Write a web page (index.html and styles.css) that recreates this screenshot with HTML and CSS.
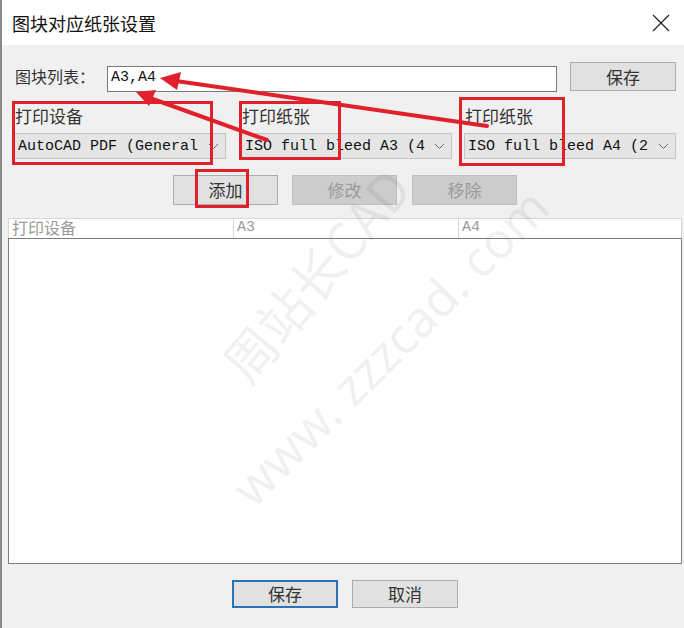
FILE: index.html
```html
<!DOCTYPE html>
<html lang="zh-CN">
<head>
    <meta charset="UTF-8">
    <title>图块对应纸张设置</title>
    <link rel="stylesheet" href="styles.css">
</head>
<body>
    <div class="dialog">
        <!-- Заголовок окна -->
        <div class="titlebar">
            <span class="title">图块对应纸张设置</span>
            <svg class="close" width="18" height="18" viewBox="0 0 18 18">
                <path d="M1 1 L17 17 M17 1 L1 17" stroke="#222" stroke-width="1.2" fill="none"/>
            </svg>
        </div>

        <div class="content">
            <!-- Список блоков -->
            <div class="list-row">
                <span class="list-label">图块列表：</span>
                <div class="textbox">A3,A4</div>
                <button class="btn save-top">保存</button>
            </div>

            <!-- Устройство и бумага -->
            <div class="fields">
                <div class="field field-device">
                    <div class="field-label">打印设备</div>
                    <div class="combo"><span>AutoCAD PDF (General</span><svg class="chev" width="11" height="7" viewBox="0 0 11 7"><path d="M1 1 L5.5 5.5 L10 1" stroke="#666" fill="none"/></svg></div>
                </div>
                <div class="field field-a3">
                    <div class="field-label">打印纸张</div>
                    <div class="combo"><span>ISO full bleed A3 (4</span><svg class="chev" width="11" height="7" viewBox="0 0 11 7"><path d="M1 1 L5.5 5.5 L10 1" stroke="#666" fill="none"/></svg></div>
                </div>
                <div class="field field-a4">
                    <div class="field-label">打印纸张</div>
                    <div class="combo"><span>ISO full bleed A4 (2</span><svg class="chev" width="11" height="7" viewBox="0 0 11 7"><path d="M1 1 L5.5 5.5 L10 1" stroke="#666" fill="none"/></svg></div>
                </div>
            </div>

            <!-- Кнопки действий -->
            <div class="actions">
                <button class="btn">添加</button>
                <button class="btn disabled">修改</button>
                <button class="btn disabled">移除</button>
            </div>

            <!-- Таблица -->
            <div class="grid">
                <div class="grid-head">
                    <div class="col col-device">打印设备</div>
                    <div class="col col-a3">A3</div>
                    <div class="col col-a4">A4</div>
                </div>
                <div class="grid-body"></div>
            </div>

            <!-- Нижние кнопки -->
            <div class="footer">
                <button class="btn default">保存</button>
                <button class="btn">取消</button>
            </div>
        </div>

        <!-- Водяной знак -->
        <div class="watermark wm-name">周站长CAD</div>
        <div class="watermark wm-url">www. zzzcad. com</div>

        <!-- Пометки поверх скриншота -->
        <svg class="marks" width="684" height="628" viewBox="0 0 684 628">
            <g fill="none" stroke="#e0212b" stroke-width="3">
                <rect x="13.5" y="102.5" width="198" height="61"/>
                <rect x="240.5" y="102.5" width="99" height="56"/>
                <rect x="460.5" y="98.5" width="103" height="66"/>
                <rect x="196.5" y="170.5" width="51" height="36"/>
            </g>
            <g stroke="#e0212b" stroke-width="4" stroke-linecap="round">
                <line x1="487" y1="126" x2="176" y2="81"/>
                <line x1="267" y1="140" x2="150" y2="98"/>
            </g>
            <g fill="#e0212b">
                <polygon points="160,78 181,72 177,90"/>
                <polygon points="136,92 156,90 149,106"/>
            </g>
        </svg>
    </div>
</body>
</html>
```

FILE: styles.css
```css
/* Общие стили */
body {
    margin: 0;
    background: #f0f0f0;
    font-family: "Noto Sans CJK SC", "Noto Sans", sans-serif;
}

.dialog {
    position: relative;
    width: 684px;
    height: 628px;
    overflow: hidden;
    background: #f0f0f0;
    border-left: 2px solid #8a8a8a;
    box-sizing: border-box;
}

.titlebar {
    height: 45px;
    background: #ffffff;
    display: flex;
    align-items: center;
    justify-content: space-between;
    padding: 0 14px 0 10px;
}

.title {
    font-size: 18px;
    color: #111;
}

.close {
    display: block;
}

.content {
    display: flex;
    flex-direction: column;
}

/* Кнопки */
.btn {
    font-family: "Noto Sans CJK SC", sans-serif;
    font-size: 17px;
    color: #333;
    background: #e1e1e1;
    border: 1px solid #adadad;
    box-sizing: border-box;
    padding: 0;
    width: 106px;
    height: 30px;
    line-height: 26px;
}

.btn.disabled {
    background: #cccccc;
    border-color: #bfbfbf;
    color: #9a9a9a;
}

.btn.default {
    border: 2px solid #2a73b8;
    height: 29px;
}

/* Строка списка */
.list-row {
    display: flex;
    align-items: flex-start;
    padding: 17px 0 0 13px;
}

.list-label {
    width: 92px;
    margin-top: 3px;
    font-size: 16px;
    line-height: 22px;
    color: #333;
}

.textbox {
    width: 450px;
    height: 26px;
    margin-top: 4px;
    box-sizing: border-box;
    background: #fff;
    border: 1px solid #7a7a7a;
    font-family: "Liberation Mono", monospace;
    font-size: 15px;
    line-height: 22px;
    padding-left: 3px;
    color: #111;
}

.save-top {
    margin-left: 13px;
    height: 29px;
}

/* Поля */
.fields {
    display: flex;
    padding-left: 12px;
    margin-top: 14px;
}

.field-device { width: 212px; }
.field-a3 { width: 211px; margin-left: 15px; }
.field-a4 { width: 212px; margin-left: 12px; }

.field-label {
    font-size: 17px;
    line-height: 20px;
    color: #333;
    padding-left: 1px;
}

.combo {
    margin-top: 7px;
    height: 26px;
    box-sizing: border-box;
    background: #e5e5e5;
    border: 1px solid #c4c4c4;
    display: flex;
    align-items: center;
    justify-content: space-between;
    padding: 0 6px 0 3px;
    font-family: "Liberation Mono", monospace;
    font-size: 15px;
    color: #111;
    white-space: nowrap;
    overflow: hidden;
}

.chev {
    flex: none;
}

/* Действия */
.actions {
    display: flex;
    padding-left: 171px;
    margin-top: 16px;
}

.actions .btn {
    width: 105px;
}

.actions .btn + .btn {
    margin-left: 14px;
}

.actions .btn:last-child {
    margin-left: 15px;
}

/* Таблица */
.grid {
    margin: 13px 0 0 6px;
    width: 674px;
}

.grid-head {
    display: flex;
    height: 20px;
    background: #fff;
    border: 1px solid #d6d6d6;
    border-bottom: none;
    box-sizing: border-box;
}

.col {
    font-size: 16px;
    line-height: 17px;
    color: #9a9a9a;
    padding-left: 3px;
    box-sizing: border-box;
}

.col-a3, .col-a4 {
    font-family: "Liberation Mono", monospace;
    font-size: 15px;
    border-left: 1px solid #d6d6d6;
}

.col-device { width: 224px; }
.col-a3 { width: 225px; }
.col-a4 { flex: 1; }

.grid-body {
    height: 326px;
    background: #fff;
    border: 1px solid #7d7d7d;
    box-sizing: border-box;
}

/* Низ */
.footer {
    display: flex;
    padding-left: 230px;
    margin-top: 16px;
}

.footer .btn {
    height: 28px;
    line-height: 24px;
}

.footer .btn + .btn {
    margin-left: 14px;
}

/* Водяной знак */
.watermark {
    position: absolute;
    color: rgba(0, 0, 0, 0.06);
    white-space: nowrap;
    transform-origin: left center;
    pointer-events: none;
}

.wm-name {
    left: 230px;
    top: 335px;
    font-size: 52px;
    transform: rotate(-50deg);
}

.wm-url {
    left: 238px;
    top: 462px;
    font-family: "Noto Sans", sans-serif;
    font-size: 50px;
    transform: rotate(-45deg);
}

.marks {
    position: absolute;
    left: -2px;
    top: 0;
    pointer-events: none;
}
```
